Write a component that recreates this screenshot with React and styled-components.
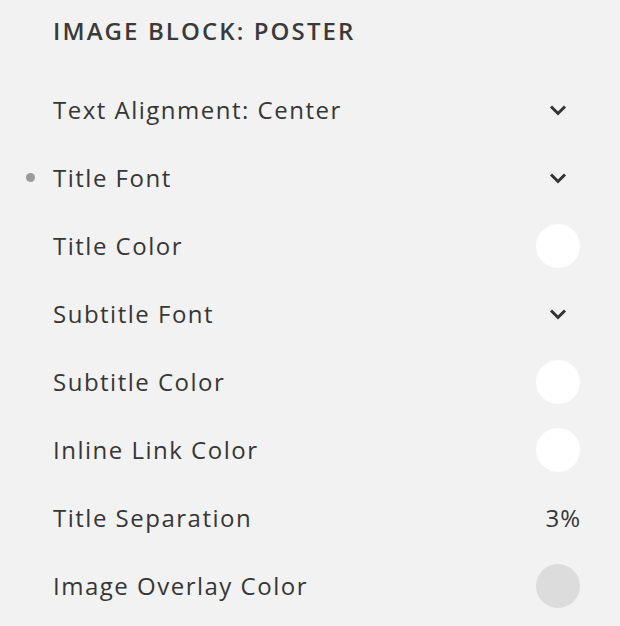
import React from "react";
import styled, { createGlobalStyle } from "styled-components";

const Global = createGlobalStyle`
  html, body { margin: 0; padding: 0; background: #f2f2f2; }
  body { font-family: "Open Sans", "Liberation Sans", sans-serif; color: #3b3b3b; }
`;

const Panel = styled.div`
  width: 620px;
  height: 626px;
  box-sizing: border-box;
  padding: 14px 40px 0 53px;
  background: #f2f2f2;
  display: flex;
  flex-direction: column;
`;

const Header = styled.h2`
  margin: 0 0 28px;
  height: 34px;
  display: flex;
  align-items: center;
  font-size: 24px;
  font-weight: 600;
  letter-spacing: 2.1px;
  color: #3a3a3a;
  padding-bottom: 2px;
  box-sizing: border-box;
`;

const Row = styled.div`
  position: relative;
  height: 68px;
  display: flex;
  align-items: center;
  justify-content: space-between;
`;

const Label = styled.span`
  font-size: 24px;
  font-weight: 400;
  letter-spacing: 1.5px;
  color: #363636;
  margin-top: -2px;
`;

const Dot = styled.span`
  position: absolute;
  left: -27px;
  top: 50%;
  width: 9px;
  height: 9px;
  margin-top: -5px;
  border-radius: 50%;
  background: #9b9b9b;
`;

const Control = styled.div`
  width: 44px;
  display: flex;
  justify-content: ${(p) => (p.$end ? "flex-end" : "center")};
  align-items: center;
`;

const Swatch = styled.span`
  width: 44px;
  height: 44px;
  border-radius: 50%;
  background: ${(p) => p.$color};
`;

const Value = styled.span`
  font-size: 24px;
  letter-spacing: 1px;
  margin-right: -1px;
  margin-top: -2px;
  color: #363636;
`;

const Chevron = () => (
  <svg width="18" height="12" viewBox="0 0 18 12">
    <polyline points="2,2.5 9,9.5 16,2.5" fill="none" stroke="#333" strokeWidth="3" />
  </svg>
);

const rows = [
  { label: "Text Alignment: Center", type: "chevron" },
  { label: "Title Font", type: "chevron", dot: true },
  { label: "Title Color", type: "swatch", color: "#ffffff" },
  { label: "Subtitle Font", type: "chevron" },
  { label: "Subtitle Color", type: "swatch", color: "#ffffff" },
  { label: "Inline Link Color", type: "swatch", color: "#ffffff" },
  { label: "Title Separation", type: "value", value: "3%" },
  { label: "Image Overlay Color", type: "swatch", color: "#dcdcdc" },
];

export default function App() {
  return (
    <>
      <Global />
      <Panel>
        <Header>IMAGE BLOCK: POSTER</Header>
        {rows.map((r) => (
          <Row key={r.label}>
            {r.dot && <Dot />}
            <Label>{r.label}</Label>
            <Control $end={r.type === "value"}>
              {r.type === "chevron" && <Chevron />}
              {r.type === "swatch" && <Swatch $color={r.color} />}
              {r.type === "value" && <Value>{r.value}</Value>}
            </Control>
          </Row>
        ))}
      </Panel>
    </>
  );
}
